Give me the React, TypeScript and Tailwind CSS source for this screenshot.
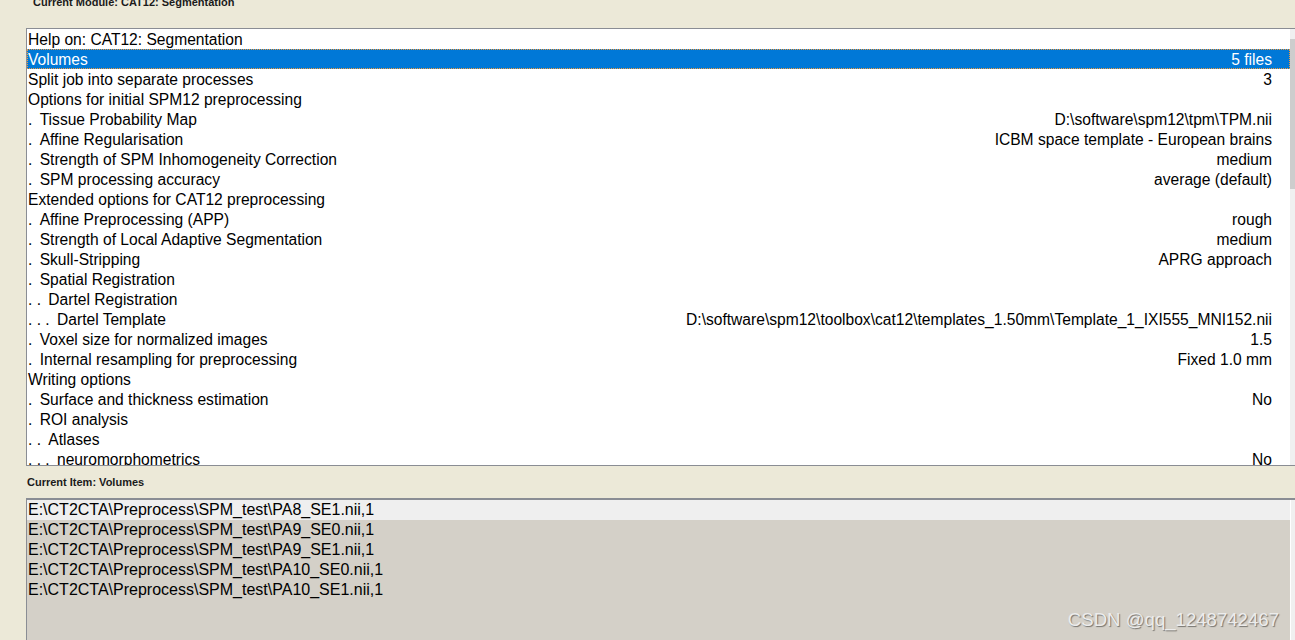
import React from 'react';

type Row = { label: string; value?: string };

const rows: Row[] = [
  { label: 'Help on: CAT12: Segmentation' },
  { label: 'Volumes', value: '5 files' },
  { label: 'Split job into separate processes', value: '3' },
  { label: 'Options for initial SPM12 preprocessing' },
  { label: '. Tissue Probability Map', value: 'D:\\software\\spm12\\tpm\\TPM.nii' },
  { label: '. Affine Regularisation', value: 'ICBM space template - European brains' },
  { label: '. Strength of SPM Inhomogeneity Correction', value: 'medium' },
  { label: '. SPM processing accuracy', value: 'average (default)' },
  { label: 'Extended options for CAT12 preprocessing' },
  { label: '. Affine Preprocessing (APP)', value: 'rough' },
  { label: '. Strength of Local Adaptive Segmentation', value: 'medium' },
  { label: '. Skull-Stripping', value: 'APRG approach' },
  { label: '. Spatial Registration' },
  { label: '. . Dartel Registration' },
  {
    label: '. . . Dartel Template',
    value: 'D:\\software\\spm12\\toolbox\\cat12\\templates_1.50mm\\Template_1_IXI555_MNI152.nii',
  },
  { label: '. Voxel size for normalized images', value: '1.5' },
  { label: '. Internal resampling for preprocessing', value: 'Fixed 1.0 mm' },
  { label: 'Writing options' },
  { label: '. Surface and thickness estimation', value: 'No' },
  { label: '. ROI analysis' },
  { label: '. . Atlases' },
  { label: '. . . neuromorphometrics', value: 'No' },
];

const files = [
  'E:\\CT2CTA\\Preprocess\\SPM_test\\PA8_SE1.nii,1',
  'E:\\CT2CTA\\Preprocess\\SPM_test\\PA9_SE0.nii,1',
  'E:\\CT2CTA\\Preprocess\\SPM_test\\PA9_SE1.nii,1',
  'E:\\CT2CTA\\Preprocess\\SPM_test\\PA10_SE0.nii,1',
  'E:\\CT2CTA\\Preprocess\\SPM_test\\PA10_SE1.nii,1',
];

function Label({ text }: { text: string }) {
  // tree depth dots render a little wider in the original
  const m = text.match(/^((?:\. )+)(.*)$/);
  if (!m) return <span>{text}</span>;
  return (
    <span className="whitespace-pre">
      <span className="mr-[3px]">{m[1]}</span>
      {m[2]}
    </span>
  );
}

export default function App() {
  return (
    <div className="relative w-[1295px] h-[640px] overflow-hidden bg-[#ECE9D8] font-['Liberation_Sans',Arial,sans-serif] text-black">
      {/* module title, partly cut off at the top */}
      <div className="h-[32px] -mt-[4px] pl-[33px] text-[11px] leading-[13px] font-bold text-[#1b1b1b]">
        Current Module: CAT12: Segmentation
      </div>

      {/* job tree list */}
      <div className="ml-[26px] h-[438px] flex border-t border-b border-l border-[#8a8d94]">
        <div className="flex-1 bg-white overflow-hidden">
          {rows.map((r, i) => (
            <div
              key={i}
              className={
                i === 1
                  ? 'h-[20px] flex items-center justify-between pt-[2px] pl-0 pr-[17px] text-[15.6px] leading-[18px] bg-[#0078D7] text-white border border-dotted border-[#f29a3c]'
                  : 'h-[20px] flex items-center justify-between pt-[2px] pl-[1px] pr-[18px] text-[15.6px] leading-[18px] whitespace-nowrap'
              }
            >
              <Label text={r.label} />
              {r.value && <span>{r.value}</span>}
            </div>
          ))}
        </div>
        <div className="w-[5px] bg-[#f0f0f0] flex flex-col">
          <div className="h-[10px]" />
          <div className="h-[150px] bg-[#cdcdcd]" />
        </div>
      </div>

      {/* current item label */}
      <div className="h-[32px] pl-[27px] flex items-center text-[11px] font-bold text-[#1b1b1b]">
        Current Item: Volumes
      </div>

      {/* file list */}
      <div className="ml-[26px] h-[142px] flex border-t-2 border-l border-[#8a8d94]">
        <div className="flex-1 bg-[#D4D0C8]">
          {files.map((f, i) => (
            <div
              key={i}
              className={
                i === 0
                  ? 'h-[20px] pl-[1px] text-[16px] leading-[20px] bg-[#EFEFEF]'
                  : 'h-[20px] pl-[1px] text-[16px] leading-[20px]'
              }
            >
              {f}
            </div>
          ))}
        </div>
        <div className="w-[5px] bg-[#f0f0f0] border-l border-white" />
      </div>

      {/* watermark */}
      <div className="absolute right-[16px] bottom-[9px] text-[18.6px] leading-[22px] text-[#ececec] [text-shadow:1px_1px_1px_rgba(0,0,0,0.45)]">
        CSDN @qq_1248742467
      </div>
    </div>
  );
}
